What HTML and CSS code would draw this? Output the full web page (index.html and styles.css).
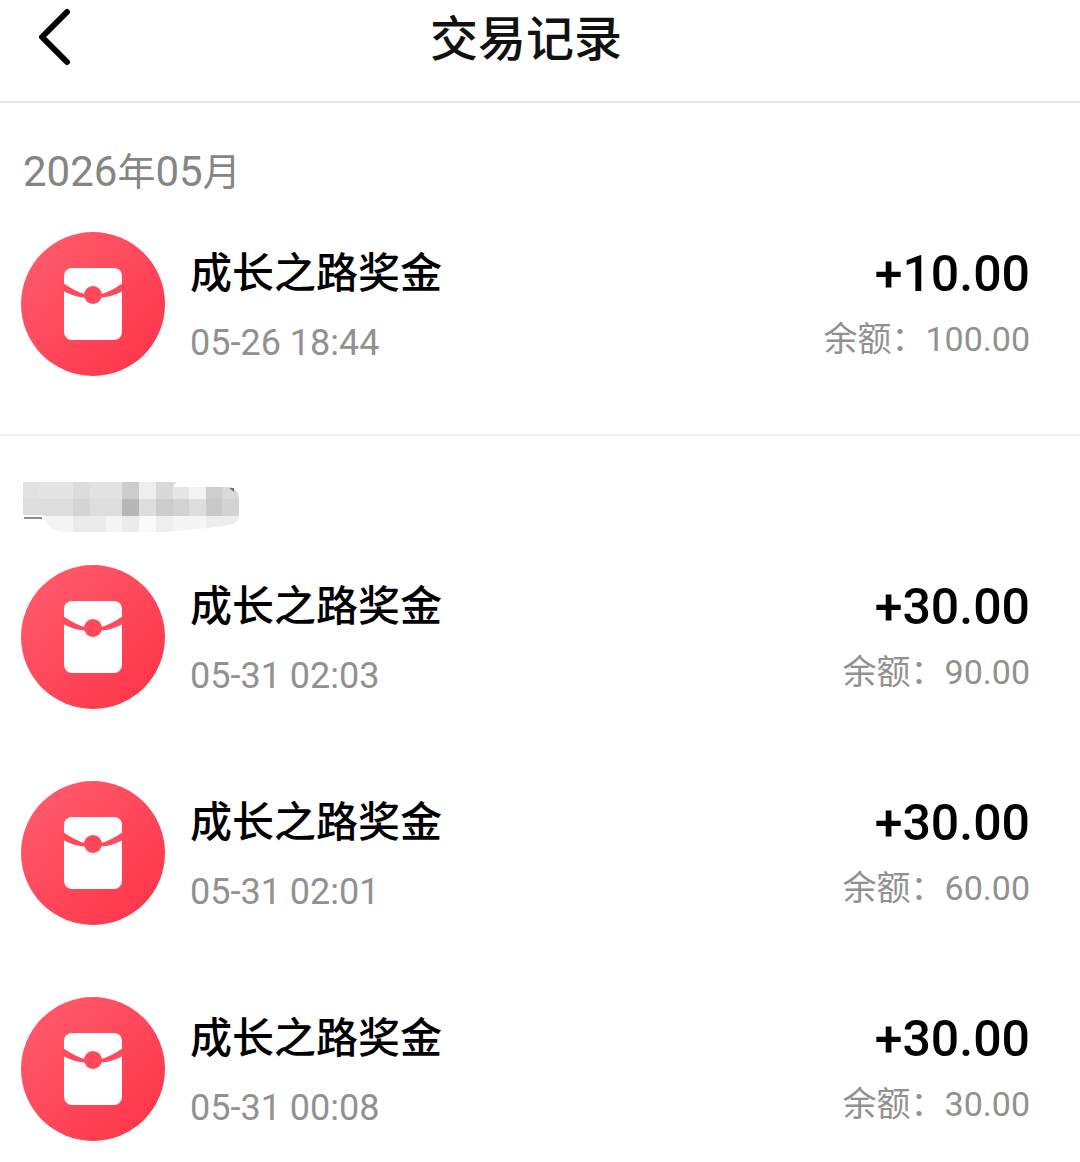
FILE: index.html
```html
<!DOCTYPE html>
<html lang="zh-CN">
    <head>
        <meta charset="UTF-8" />
        <meta name="viewport" content="width=device-width, initial-scale=1.0" />
        <title>交易记录</title>
        <link rel="stylesheet" href="styles.css">
    </head>
    <body>
        <!-- 红包图标 -->
        <svg class="defs" width="0" height="0" aria-hidden="true">
            <defs>
                <linearGradient id="red" x1="0" y1="0" x2="1" y2="1">
                    <stop offset="0.1" stop-color="#ff5a6c" />
                    <stop offset="0.9" stop-color="#ff364a" />
                </linearGradient>
                <symbol id="packet" viewBox="0 0 144 144">
                    <circle cx="72" cy="72" r="72" fill="url(#red)" />
                    <rect x="43" y="36" width="58" height="72" rx="8" fill="#fff" />
                    <path fill="#ff4a5c" d="M42 51Q55 60 64 62H80Q89 60 102 51V59Q90 65 80 65.500H64Q54 65 42 59Z" />
                    <circle cx="72" cy="63" r="9" fill="#ff485a" />
                </symbol>
            </defs>
        </svg>

        <header class="top">
            <button class="back" type="button" aria-label="返回">
                <svg width="36" height="58" viewBox="0 0 36 58">
                    <path d="M31 4L6 29L31 54" fill="none" stroke="#000" stroke-width="6" stroke-linecap="round" stroke-linejoin="round" />
                </svg>
            </button>
            <h1 class="title">交易记录</h1>
        </header>

        <main>
            <section class="group">
                <h2 class="month"><span class="num">2026</span>年<span class="num">05</span>月</h2>
                <ul class="list">
                    <li class="item">
                        <svg class="icon"><use href="#packet" /></svg>
                        <div class="info">
                            <p class="name">成长之路奖金</p>
                            <p class="time">05-26 18:44</p>
                        </div>
                        <div class="money">
                            <p class="amount">+10.00</p>
                            <p class="balance">余额：100.00</p>
                        </div>
                    </li>
                </ul>
            </section>

            <section class="group">
                <!-- 打码的月份 -->
                <div class="month">
                    <svg class="mosaic" width="216" height="48" viewBox="0 0 216 48">
                        <clipPath id="blob">
                            <path d="M0 1H154L150 6H208Q216 10 216 18V36Q214 43 205 44Q160 51 130 51H40Q24 50 20 34H0Z" />
                        </clipPath>
                        <g clip-path="url(#blob)">
                            <rect width="216" height="18" fill="#e2e2e2" />
                            <rect x="16" width="34" height="18" fill="#e5e5e5" />
                            <rect x="50" width="17" height="18" fill="#dcdcdc" />
                            <rect x="99" width="17" height="18" fill="#cdcdcd" />
                            <rect x="116" width="17" height="18" fill="#eeeeee" />
                            <rect x="133" width="17" height="18" fill="#d9d9d9" />
                            <rect x="150" width="16" height="18" fill="#e6e6e6" />
                            <rect x="166" width="17" height="18" fill="#f3f3f3" />
                            <rect x="183" width="16" height="18" fill="#cecece" />
                            <rect x="199" width="17" height="18" fill="#dadada" />
                            <rect y="18" width="216" height="17" fill="#dddddd" />
                            <rect x="50" y="18" width="17" height="17" fill="#d4d4d4" />
                            <rect x="99" y="18" width="17" height="17" fill="#b7b7b7" />
                            <rect x="133" y="18" width="17" height="17" fill="#cccccc" />
                            <rect x="150" y="18" width="16" height="17" fill="#d2d2d2" />
                            <rect x="183" y="18" width="16" height="17" fill="#c9c9c9" />
                            <rect x="199" y="18" width="17" height="17" fill="#d3d3d3" />
                            <rect y="35" width="216" height="17" fill="#f5f5f5" />
                            <rect x="50" y="35" width="33" height="17" fill="#ebebeb" />
                            <rect x="99" y="35" width="17" height="17" fill="#ececec" />
                            <rect x="116" y="35" width="17" height="17" fill="#fafafa" />
                            <rect x="133" y="35" width="17" height="17" fill="#eeeeee" />
                            <rect x="183" y="35" width="33" height="17" fill="#ededed" />
                        </g>
                        <path d="M1 37H19" stroke="#8a8a8a" stroke-width="2" />
                        <path d="M206 7H211V11Z" fill="#777" />
                    </svg>
                </div>
                <ul class="list">
                    <li class="item">
                        <svg class="icon"><use href="#packet" /></svg>
                        <div class="info">
                            <p class="name">成长之路奖金</p>
                            <p class="time">05-31 02:03</p>
                        </div>
                        <div class="money">
                            <p class="amount">+30.00</p>
                            <p class="balance">余额：90.00</p>
                        </div>
                    </li>
                    <li class="item">
                        <svg class="icon"><use href="#packet" /></svg>
                        <div class="info">
                            <p class="name">成长之路奖金</p>
                            <p class="time">05-31 02:01</p>
                        </div>
                        <div class="money">
                            <p class="amount">+30.00</p>
                            <p class="balance">余额：60.00</p>
                        </div>
                    </li>
                    <li class="item">
                        <svg class="icon"><use href="#packet" /></svg>
                        <div class="info">
                            <p class="name">成长之路奖金</p>
                            <p class="time">05-31 00:08</p>
                        </div>
                        <div class="money">
                            <p class="amount">+30.00</p>
                            <p class="balance">余额：30.00</p>
                        </div>
                    </li>
                </ul>
            </section>
        </main>
    </body>
</html>
```

FILE: styles.css
```css
* {
    box-sizing: border-box;
    margin: 0;
    padding: 0;
}

body {
    background-color: #fff;
    color: #000;
    font-family: Roboto, "Noto Sans CJK SC", sans-serif;
}

.defs {
    display: block;
}

/* 顶部导航 */
.top {
    display: grid;
    grid-template-columns: 72px 1fr 100px;
    align-items: start;
    padding-bottom: 21px;
    border-bottom: 2px solid #e6e6e6;
}
.back {
    height: 74px;
    padding-left: 36px;
    border: 0;
    background: none;
    cursor: pointer;
}
.back svg {
    display: block;
}
.title {
    color: #111;
    font-size: 48px;
    font-weight: 500;
    line-height: 80px;
    text-align: center;
}

/* 月份分组 */
.group {
    padding: 45px 50px 22px 21px;
    border-bottom: 2px solid #f2f2f2;
}
.group:last-child {
    padding-bottom: 0;
    border-bottom: 0;
}
.month {
    display: flex;
    align-items: center;
    height: 48px;
    padding-left: 2px;
    color: #858585;
    font-size: 38px;
    font-weight: 400;
    line-height: 50px;
}
.month .num {
    font-size: 42px;
}
.mosaic {
    overflow: visible;
}

/* 交易列表 */
.list {
    list-style: none;
}
.item {
    display: flex;
    padding: 36px 0;
}
.group:last-child .item:last-child {
    padding-bottom: 20px;
}
.icon {
    flex: none;
    width: 144px;
    height: 144px;
}
.info {
    flex: 1;
    padding: 12px 0 0 25px;
}
.name {
    font-size: 42px;
    font-weight: 500;
    line-height: 60px;
}
.time {
    padding-top: 15px;
    color: #919191;
    font-size: 36px;
    font-weight: 400;
    line-height: 48px;
}
.money {
    padding-top: 12px;
    text-align: right;
}
.amount {
    font-size: 50px;
    font-weight: 500;
    line-height: 60px;
}
.balance {
    padding-top: 11px;
    color: #919191;
    font-size: 34px;
    font-weight: 400;
    line-height: 48px;
}
```
